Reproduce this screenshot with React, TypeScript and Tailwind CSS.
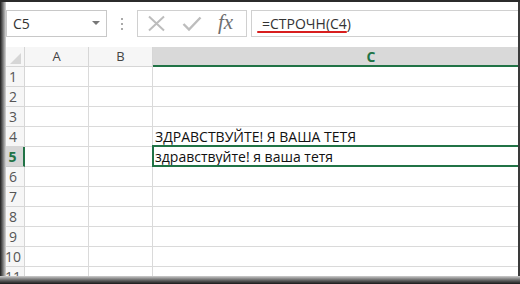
import React from 'react';

const font = { fontFamily: '"Open Sans", "Noto Sans", sans-serif' };

const rows = [1, 2, 3, 4, 5, 6, 7, 8, 9, 10, 11];

const cellText: Record<number, string> = {
  4: 'ЗДРАВСТВУЙТЕ! Я ВАША ТЕТЯ',
  5: 'здравствуйте! я ваша тетя',
};

function FormulaBar() {
  return (
    <div className="h-[45px] shrink-0 flex items-start pt-[8px] bg-white">
      {/* Name box */}
      <div className="w-[101px] h-[27px] shrink-0 border border-[#c8c8c8] bg-white flex items-center justify-between pl-[6px] pr-[6px]">
        <span className="text-[14px] text-[#333]">C5</span>
        <svg width="8" height="5" viewBox="0 0 8 5">
          <path d="M0 0h8L4 4z" fill="#777" />
        </svg>
      </div>
      {/* Grip dots */}
      <div className="w-[30px] h-[27px] shrink-0 flex flex-col items-center justify-center gap-[3px]">
        <span className="w-[2px] h-[2px] bg-[#aaa]" />
        <span className="w-[2px] h-[2px] bg-[#aaa]" />
        <span className="w-[2px] h-[2px] bg-[#aaa]" />
      </div>
      {/* Cancel / enter / fx */}
      <div className="w-[110px] h-[27px] shrink-0 border border-[#d0d0d0] bg-white flex items-center pl-[9px] gap-[16px]">
        <svg width="19" height="17" viewBox="0 0 19 17">
          <path d="M2 1.5L17 15.5M17 1.5L2 15.5" stroke="#bdbdbd" strokeWidth="2" fill="none" />
        </svg>
        <svg width="20" height="17" viewBox="0 0 20 17">
          <path d="M1.5 9L7 14.5L18.5 2.5" stroke="#bdbdbd" strokeWidth="2.4" fill="none" />
        </svg>
        <span
          className="text-[21px] italic leading-none text-[#6f6f6f] -mt-[3px]"
          style={{ fontFamily: '"Liberation Serif", "DejaVu Serif", serif' }}
        >
          fx
        </span>
      </div>
      {/* Formula input */}
      <div className="flex-1 h-[27px] ml-[4px] border-t border-b border-l border-[#d0d0d0] bg-white flex items-center pl-[10px] relative">
        <span className="text-[14px] text-[#333] leading-none">=СТРОЧН(С4)</span>
        <div className="absolute left-[5px] top-[20px] w-[90px] h-[2px] rounded-full bg-[#d81e1e]" />
      </div>
    </div>
  );
}

function Grid() {
  return (
    <div className="flex-1 overflow-hidden">
      {/* Column headers */}
      <div className="flex h-[20px]">
        <div className="w-[19px] shrink-0 border-r border-b border-[#d6d6d6] bg-[#f6f6f6] flex items-end justify-end pr-[3px] pb-[2px]">
          <svg width="11" height="11" viewBox="0 0 11 11">
            <path d="M11 0V11H0z" fill="#d6d6d6" />
          </svg>
        </div>
        <div className="w-[64px] shrink-0 border-r border-b border-[#d6d6d6] bg-[#f6f6f6] flex items-center justify-center text-[13px] text-[#444]">
          A
        </div>
        <div className="w-[64px] shrink-0 border-r border-b border-[#d6d6d6] bg-[#f6f6f6] flex items-center justify-center text-[13px] text-[#444]">
          B
        </div>
        <div className="w-[436px] shrink-0 border-b-2 border-[#217346] bg-[#d9d9d9] flex items-center justify-center text-[14px] font-bold text-[#217346]">
          C
        </div>
      </div>
      {rows.map(r => {
        const active = r === 5;
        return (
          <div key={r} className="flex h-[20px]">
            <div
              className={`w-[19px] shrink-0 border-b flex items-end justify-center pr-[4px] text-[14px] leading-[18px] ${
                active
                  ? 'bg-[#d6d6d6] border-r-2 border-r-[#217346] border-b-[#c8c8c8] font-bold text-[#217346]'
                  : 'bg-[#f6f6f6] border-r border-[#d6d6d6] text-[#555]'
              }`}
            >
              {r}
            </div>
            <div className="w-[64px] shrink-0 border-r border-b border-[#dadada]" />
            <div className="w-[64px] shrink-0 border-r border-b border-[#dadada]" />
            <div className="w-[436px] shrink-0 border-b border-[#dadada] relative flex items-end pl-[2px] text-[14px] leading-[18px] text-[#111]">
              {cellText[r] && <span className="whitespace-nowrap">{cellText[r]}</span>}
              {active && (
                <div className="absolute -top-[2px] -bottom-[1px] -left-[1px] right-0 border-2 border-[#217346]" />
              )}
            </div>
          </div>
        );
      })}
    </div>
  );
}

export default function App() {
  return (
    <div className="w-[520px] h-[284px] flex flex-col bg-white overflow-hidden" style={font}>
      <div className="h-[2px] shrink-0 bg-[#2b2b2b]" />
      <div className="flex-1 flex min-h-0">
        <div className="w-[6px] shrink-0 bg-gradient-to-r from-[#1e1e1e] via-[#777] to-[#d8d8d8]" />
        <div className="flex-1 flex flex-col min-w-0">
          <FormulaBar />
          <Grid />
        </div>
        <div className="w-[2px] shrink-0 bg-[#3a3a3a]" />
      </div>
      <div className="h-[8px] shrink-0 bg-gradient-to-b from-[#cfcfcf] via-[#6a6a6a] to-[#1a1a1a]" />
    </div>
  );
}
